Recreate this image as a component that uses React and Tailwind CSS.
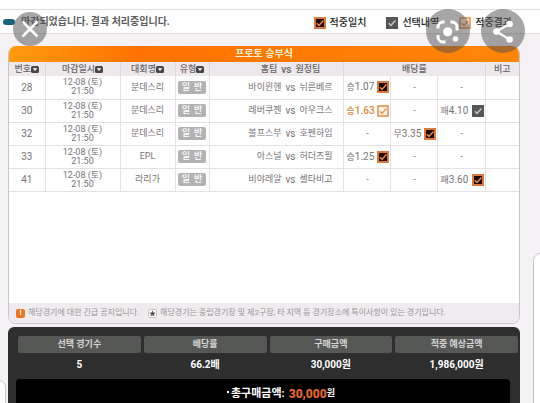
import { clsx } from 'clsx'

const MATCHES = [
  { no: 28, league: '분데스리', home: '바이뮌헨', away: '뉘른베르', odds: [['승', '1.07', 'hit'], null, null] },
  { no: 30, league: '분데스리', home: '레버쿠젠', away: '아우크스', odds: [['승', '1.63', 'result'], null, ['패', '4.10', 'pick']] },
  { no: 32, league: '분데스리', home: '볼프스부', away: '호펜하임', odds: [null, ['무', '3.35', 'hit'], null] },
  { no: 33, league: 'EPL', home: '아스널', away: '허더즈필', odds: [['승', '1.25', 'hit'], null, null] },
  { no: 41, league: '라리가', home: '비야레알', away: '셀타비고', odds: [null, null, ['패', '3.60', 'hit']] },
]

const SUMMARY = [
  ['선택 경기수', '5'],
  ['배당률', '66.2배'],
  ['구매금액', '30,000원'],
  ['적중 예상금액', '1,986,000원'],
]

const LEGEND = [
  ['hit', '적중일치'],
  ['pick', '선택내역'],
  ['result', '적중결과'],
]

const MARK_BOX = {
  hit: 'border-[#dc7a3c] bg-[#1c0a04]',
  pick: 'border-[#555555] bg-[#585858]',
  result: 'border-[#eba56f] bg-[#fff3e6]',
}

const MARK_STROKE = { hit: '#e58a4c', pick: '#c4c4c4', result: '#e39a62' }

const Mark = ({ kind, id, label }) => (
  <span className="relative inline-block size-3 shrink-0">
    <input
      type="checkbox"
      id={id}
      aria-label={label}
      defaultChecked
      className={clsx('block size-3 appearance-none border-2', MARK_BOX[kind])}
    />
    <svg viewBox="0 0 12 12" className="pointer-events-none absolute inset-0 size-3" fill="none">
      <path d="M2.800 6.200 5 8.400 9.400 3.600" stroke={MARK_STROKE[kind]} strokeWidth="1.5" />
    </svg>
  </span>
)

const SortHead = ({ children }) => (
  <button type="button" className="inline-flex items-center whitespace-nowrap">
    {children}
    <svg viewBox="0 0 8 7" className="h-[7px] w-2">
      <rect width="8" height="7" rx="1.500" fill="#4b4749" />
      <path d="M1.800 2.200h4.400L4 5z" fill="#fff" />
    </svg>
  </button>
)

const Odd = ({ odd }) => {
  if (!odd) return <span>-</span>
  const [outcome, rate, kind] = odd
  return (
    <span className="flex items-center justify-between pr-px pl-0.5">
      <span className={clsx(kind === 'result' && 'font-medium text-[#d58a3c]')}>
        {outcome}
        <span className="text-[10px]">{rate}</span>
      </span>
      <Mark kind={kind} label={`${outcome}${rate}`} />
    </span>
  )
}

const TopBar = () => (
  <header className="relative flex h-[25px] items-center border-y border-[#dedbdd] bg-white pr-7 pl-[3px] text-[10px]">
    <span className="h-[6px] w-3 rounded-full bg-[#17647f]" />
    <h1 className="ml-1.5 font-bold text-[#5c5c5c]">마감되었습니다. 결과 처리중입니다.</h1>
    <div className="ml-auto flex gap-5 pt-0.5 font-medium text-[#222]">
      {LEGEND.map(([kind, label]) => (
        <label key={kind} htmlFor={kind} className="flex items-center gap-1">
          <Mark kind={kind} id={kind} label={label} />
          {label}
        </label>
      ))}
    </div>
    <button
      type="button"
      aria-label="닫기"
      className="absolute top-[2px] left-[13px] flex size-[34px] items-center justify-center rounded-full bg-[#504e50]/50"
    >
      <svg viewBox="0 0 34 34" className="size-[34px]" stroke="#fff" strokeWidth="2.6">
        <path d="M9.500 9.500 24.500 24.500M24.500 9.500 9.500 24.500" />
      </svg>
    </button>
    <div className="absolute -top-px right-[15px] flex gap-[11px]">
      <button type="button" aria-label="렌즈" className="size-11 rounded-full bg-[#504e50]/50">
        <svg viewBox="0 0 44 44" className="size-11" fill="none" stroke="#fff" strokeWidth="3">
          <path d="M12 19.500V18a5 5 0 0 1 5-5h1.500M24.500 13H26a5 5 0 0 1 5 5v3.500M12 26v2a5 5 0 0 0 5 5h2.500" />
          <circle cx="21.700" cy="22.800" r="4.600" fill="#fff" stroke="none" />
          <circle cx="29.500" cy="30" r="2.800" fill="#fff" stroke="none" />
        </svg>
      </button>
      <button type="button" aria-label="공유" className="size-11 rounded-full bg-[#504e50]/50">
        <svg viewBox="0 0 44 44" className="size-11" fill="#fff">
          <path d="M28.600 15 15.500 22.500 28.600 30.500" fill="none" stroke="#fff" strokeWidth="2.2" />
          <circle cx="28.600" cy="15" r="3.300" />
          <circle cx="15.500" cy="22.500" r="3.300" />
          <circle cx="28.600" cy="30.500" r="3.300" />
        </svg>
      </button>
    </div>
  </header>
)

const MatchTable = () => (
  <table className="w-full table-fixed border-collapse text-center text-[9px] leading-[9px] text-[#777375]">
    <colgroup>
      <col className="w-[36px]" />
      <col className="w-[75px]" />
      <col className="w-[55px]" />
      <col className="w-[34px]" />
      <col />
      <col className="w-[47px]" />
      <col className="w-[47px]" />
      <col className="w-[47px]" />
      <col className="w-[34px]" />
    </colgroup>
    <thead className="bg-[#ece8ec] text-[#686466]">
      <tr className="h-[14px] divide-x divide-[#dcd8dc] *:p-0 *:font-medium">
        <th><SortHead>번호</SortHead></th>
        <th><SortHead>마감일시</SortHead></th>
        <th><SortHead>대회명</SortHead></th>
        <th><SortHead>유형</SortHead></th>
        <th>
          <span className="flex justify-center gap-1 pl-7">
            <span>홈팀</span>
            <span className="text-[10px]">vs</span>
            <span>원정팀</span>
          </span>
        </th>
        <th colSpan={3}>배당률</th>
        <th>비고</th>
      </tr>
    </thead>
    <tbody>
      {MATCHES.map((m) => (
        <tr key={m.no} className="h-[23px] divide-x divide-[#e4e0e4] border-b border-[#e4e0e4] *:p-0">
          <td className="text-[10px]">{m.no}</td>
          <td>
            12-08 (토)
            <br />
            21:50
          </td>
          <td>{m.league}</td>
          <td>
            <span className="mx-auto flex h-[13px] w-7 items-center justify-center gap-1 rounded-xs bg-[#b3b2b3] font-medium text-white">
              <span>일</span>
              <span>반</span>
            </span>
          </td>
          <td>
            <span className="grid grid-cols-[1fr_auto_1fr] gap-1 pl-7">
              <span className="text-right">{m.home}</span>
              <span className="text-[10px]">vs</span>
              <span className="text-left">{m.away}</span>
            </span>
          </td>
          {m.odds.map((odd, i) => (
            <td key={i}><Odd odd={odd} /></td>
          ))}
          <td />
        </tr>
      ))}
    </tbody>
  </table>
)

const Notices = () => (
  <footer className="flex h-5 items-center gap-[3px] bg-[#efebef] pl-[7px] text-[8px] text-[#999597]">
    <span className="flex size-[9px] items-center justify-center rounded-xs bg-[#e87424] font-bold text-white">!</span>
    <span className="whitespace-nowrap">해당경기에 대한 긴급 공지입니다.</span>
    <span className="ml-1.5 flex size-[9px] items-center justify-center rounded-xs border border-[#c9c6c8] bg-white">
      <svg viewBox="0 0 10 10" className="size-[7px]" fill="#555">
        <path d="m5 .5 1.300 3.100 3.300.300-2.500 2.200.800 3.300L5 7.600 2.100 9.400l.800-3.300L.4 3.900l3.300-.300z" />
      </svg>
    </span>
    <span className="whitespace-nowrap">
      해당경기는 중립경기장 및 제2구장, 타 지역 등 경기장소에 특이사항이 있는 경기입니다.
    </span>
  </footer>
)

const Summary = () => (
  <section className="mt-[3px] rounded-t-md bg-[#2e2e2e] pt-[9px] text-white">
    <dl className="mr-0.5 ml-2.5 grid grid-cols-4 gap-[3px] text-center font-bold">
      {SUMMARY.map(([label, value]) => (
        <div key={label}>
          <dt className="h-[17px] rounded-xs bg-[#565856] text-[9px] leading-[17px] text-[#d4d4d4]">{label}</dt>
          <dd className="h-[26px] text-[10px] leading-[23px]">{value}</dd>
        </div>
      ))}
    </dl>
    <p className="mr-2.5 ml-2 flex h-[30px] items-center justify-center rounded-t-sm bg-black pl-9 text-[11px] font-bold">
      <span className="mr-0.5 mb-1 size-0.5 bg-white" />
      총구매금액:
      <strong className="ml-1 text-xs text-[#e0662e]">30,000</strong>
      <span className="text-[9px]">원</span>
    </p>
  </section>
)

const App = () => (
  <div className="relative h-screen overflow-hidden bg-[#f5f2f6] font-['Roboto','Noto_Sans_CJK_KR',sans-serif]">
    <div className="bg-white pt-[9px]">
      <TopBar />
    </div>
    <main className="mt-3 mr-5 ml-2">
      <section className="overflow-hidden rounded-lg border border-t-0 border-[#c9c5c9] bg-white">
        <h2 className="h-4 bg-linear-to-r from-[#ff9a10] via-[#ff7200] via-25% to-[#ff8608] text-center text-[10px] leading-4 font-bold text-[#fff1d8]">
          프로토 승부식
        </h2>
        <div className="min-h-[241px]">
          <MatchTable />
        </div>
        <Notices />
      </section>
      <Summary />
    </main>
    <div className="absolute top-[253px] -right-2 -bottom-2 w-[15px] rounded-lg border border-[#c9c5c9] bg-white" />
    <div className="absolute top-[380px] -bottom-2 -left-2 w-[14px] rounded-lg border border-[#c9c5c9] bg-white" />
  </div>
)

export default App
